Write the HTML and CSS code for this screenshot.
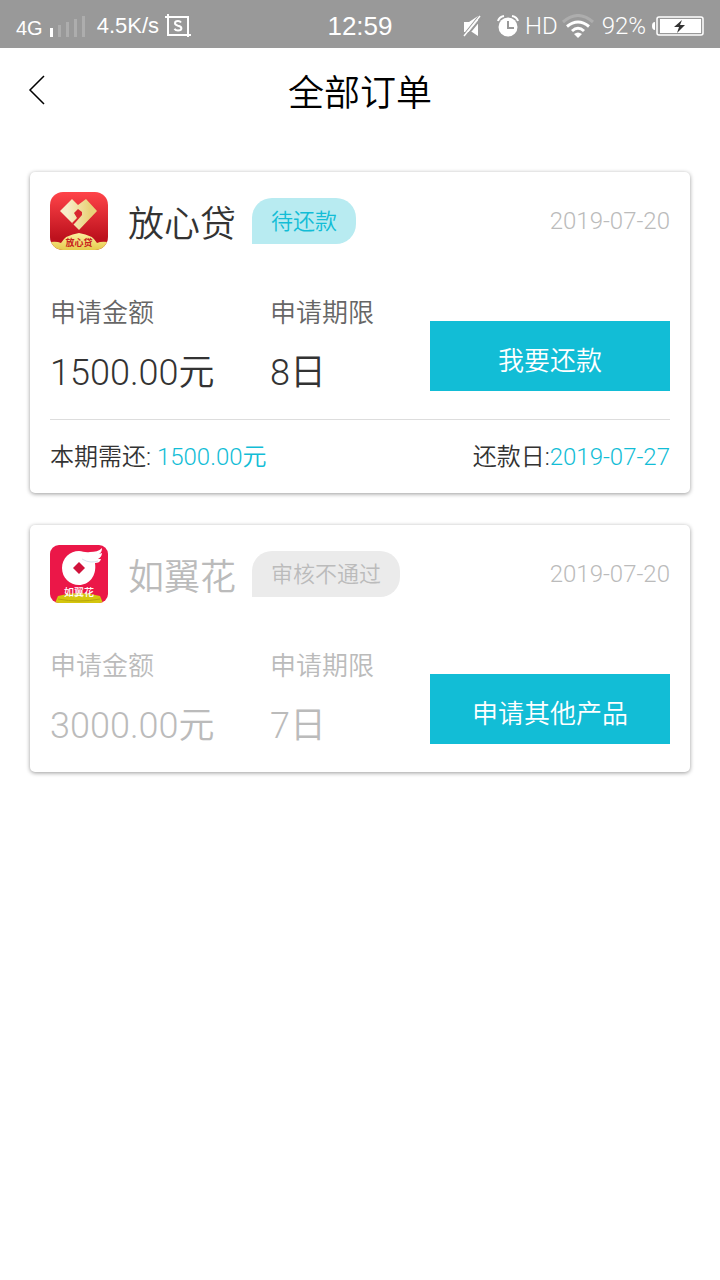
FILE: index.html
```html
<!DOCTYPE html>
<html lang="zh-CN">
<head>
    <meta charset="UTF-8">
    <meta name="viewport" content="width=device-width, initial-scale=1.0">
    <title>全部订单</title>
    <link rel="stylesheet" href="styles.css">
</head>
<body>
<div class="status-bar">
    <div class="status-left">
        <span class="network">4G</span>
        <svg class="signal" width="36" height="22" viewBox="0 0 36 22">
            <path d="M0 13h3v9H0z" fill="#fff"/>
            <path d="M8 10h3v12H8zM16 7h3v15h-3zM24 4h3v18h-3zM32 1h3v21h-3z" fill="#adadad"/>
        </svg>
        <span class="speed">4.5K/s</span>
        <svg class="shot" width="26" height="24" viewBox="0 0 26 24" fill="none" stroke="#fff" stroke-width="2">
            <path d="M0 3h23v20M3 0v21h23"/>
            <path d="M16 8.500q-1-1.500-3-1.500-3 0-3 2.300 0 1.700 3 2.400 3.400.7 3.400 2.600 0 2.200-3.400 2.200-2.500 0-3.500-1.800"/>
        </svg>
    </div>
    <div class="status-time">12:59</div>
    <div class="status-right">
        <svg width="20" height="22" viewBox="0 0 20 22">
            <path d="M1 7h5l9-6v20l-6-4H1z" fill="#fff"/>
            <path d="M0 21L17 0M2 23L20 1" stroke="#999" stroke-width="2"/>
            <path d="M1 21L17 1" stroke="#fff" stroke-width="1.500"/>
        </svg>
        <svg class="alarm" width="22" height="22" viewBox="0 0 22 22">
            <circle cx="11" cy="12" r="9.500" fill="#fff"/>
            <path d="M11 6v7h6" fill="none" stroke="#999" stroke-width="2"/>
            <path d="M1 6q1-4 6-5M21 6q-1-4-6-5" fill="none" stroke="#fff" stroke-width="2"/>
        </svg>
        <span class="hd">HD</span>
        <svg class="wifi" width="32" height="24" viewBox="0 0 32 24" fill="none" stroke-width="3">
            <path d="M1 8q15-13 30 0" stroke="#adadad"/>
            <path d="M5 12.500q11-9 22 0M10 17q6-5.500 12 0" stroke="#fff"/>
            <path d="M12 20q4-3 8 0l-4 4z" fill="#fff"/>
        </svg>
        <span class="percent">92%</span>
        <svg width="52" height="20" viewBox="0 0 52 20">
            <path d="M3 6q-3 0-3 4t3 4z" fill="#fff"/>
            <rect x="5" y="1" width="46" height="18" rx="2" fill="none" stroke="#fff" stroke-width="1.500"/>
            <path d="M8 3h41v14H8z" fill="#fff"/>
            <path d="M30 4l-8 7h5l-2 6 8-8h-5z" fill="#333"/>
        </svg>
    </div>
</div>

<header class="nav">
    <button type="button" class="back" aria-label="返回">
        <svg width="18" height="30" viewBox="0 0 18 30" fill="none" stroke="#000" stroke-width="1.500">
            <path d="M16 1L2 15l14 14"/>
        </svg>
    </button>
    <h1>全部订单</h1>
</header>

<main class="orders">
    <section class="card">
        <div class="card-head">
            <svg class="logo" viewBox="0 0 58 58">
                <defs>
                    <linearGradient id="red" x2="0" y2="1">
                        <stop offset="0" stop-color="#ff4449"/>
                        <stop offset="0.800" stop-color="#bd111d"/>
                    </linearGradient>
                    <linearGradient id="gold">
                        <stop offset="0.200" stop-color="#f8edc8"/>
                        <stop offset="0.800" stop-color="#e9d37a"/>
                    </linearGradient>
                    <linearGradient id="base" x2="0" y2="1">
                        <stop offset="0" stop-color="#fbf0a0"/>
                        <stop offset="1" stop-color="#e6cb4c"/>
                    </linearGradient>
                    <clipPath id="round"><rect width="58" height="58" rx="13"/></clipPath>
                </defs>
                <g clip-path="url(#round)">
                    <path d="M0 0h58v58H0z" fill="url(#red)"/>
                    <path d="M22 7l6 6 8-6 11 12-18 19L10 19z" fill="url(#gold)"/>
                    <path d="M28 17l4 3v3l-7 8-2 2-1-2 5-5-3-5z" fill="#d8262e"/>
                    <path d="M0 50q7-1 11 1 4-8 18-10 14 2 18 10 4-2 11-1v8H0z" fill="url(#base)"/>
                </g>
                <text x="29" y="54" text-anchor="middle" class="logo-text red">放心贷</text>
            </svg>
            <h2>放心贷</h2>
            <span class="badge">待还款</span>
            <time>2019-07-20</time>
        </div>
        <div class="card-body">
            <dl>
                <dt>申请金额</dt>
                <dd>1500.00元</dd>
            </dl>
            <dl>
                <dt>申请期限</dt>
                <dd>8日</dd>
            </dl>
            <button type="button" class="action">我要还款</button>
        </div>
        <div class="card-foot">
            <p>本期需还: <span>1500.00元</span></p>
            <p>还款日:<span>2019-07-27</span></p>
        </div>
    </section>

    <section class="card disabled">
        <div class="card-head">
            <svg class="logo" viewBox="0 0 58 58">
                <clipPath id="cut"><rect width="58" height="58" rx="9"/></clipPath>
                <g clip-path="url(#cut)">
                    <path d="M0 0h58v58H0z" fill="#eb1748"/>
                    <path d="M29 6c4 0 6 2 11 1 5 0 9-1 12-4 0 3-1 5-3 6l3-1c0 3-2 5-4 6h3c-1 3-3 4-6 4 2 13-6 22-16 22-9 0-17-7-17-17S20 6 29 6z" fill="#fff"/>
                    <path d="M32 14q5 3 9 3t7-1" fill="none" stroke="#d8e2ee"/>
                    <path d="M29 17l6 6-6 6-6-6z" fill="#d0123b"/>
                    <path d="M5 58l3-7q21-6 42 0l3 7z" fill="#d5c60d"/>
                    <path d="M8 54q21 4 42 0" fill="none" stroke="#b8a60c"/>
                </g>
                <text x="29" y="51" text-anchor="middle" class="logo-text white">如翼花</text>
            </svg>
            <h2>如翼花</h2>
            <span class="badge">审核不通过</span>
            <time>2019-07-20</time>
        </div>
        <div class="card-body">
            <dl>
                <dt>申请金额</dt>
                <dd>3000.00元</dd>
            </dl>
            <dl>
                <dt>申请期限</dt>
                <dd>7日</dd>
            </dl>
            <button type="button" class="action">申请其他产品</button>
        </div>
    </section>
</main>
</body>
</html>
```
FILE: styles.css
```css
* {
    box-sizing: border-box;
    margin: 0;
    padding: 0;
}

body {
    font-family: Roboto, "Noto Sans CJK SC", sans-serif;
    font-weight: 350;
    background: #fff;
    color: #333;
}

svg {
    display: block;
    flex-shrink: 0;
}

h1,
h2 {
    font-size: 36px;
    font-weight: 350;
}

/* status bar */
.status-bar {
    display: grid;
    grid-template-columns: 1fr auto 1fr;
    align-items: center;
    height: 48px;
    padding: 0 16px;
    background: #999;
    color: #fff;
    font-family: "Liberation Sans", sans-serif;
    font-size: 24px;
    font-weight: 400;
    line-height: 48px;
}

.status-left,
.status-right {
    display: flex;
    align-items: center;
}

.status-right {
    justify-content: flex-end;
}

.network {
    font-size: 20px;
    padding-top: 4px;
}

.signal {
    margin: 0 11px 0 7px;
}

.speed {
    font-size: 22px;
}

.shot {
    margin-left: 6px;
}

.status-time {
    font-size: 26px;
}

.alarm {
    margin: 0 6px 0 14px;
}

.hd,
.percent {
    font-family: Roboto, sans-serif;
    font-weight: 350;
}

.wifi {
    margin: 0 8px 0 4px;
}

.percent {
    margin-right: 6px;
}

/* title bar */
.nav {
    display: grid;
    grid-template-columns: 64px 1fr 64px;
    align-items: center;
    height: 84px;
}

.nav h1 {
    color: #000;
    text-align: center;
}

.back {
    display: flex;
    align-items: center;
    height: 84px;
    padding-left: 28px;
    border: none;
    background: none;
    cursor: pointer;
}

/* orders */
.orders {
    display: flex;
    flex-direction: column;
    gap: 32px;
    padding: 40px 30px;
}

.card {
    padding: 20px 20px 0;
    border-radius: 5px;
    background: #fff;
    box-shadow: 0 1px 4px rgba(0, 0, 0, 0.4);
}

.card-head {
    display: flex;
    align-items: center;
}

.logo {
    width: 58px;
    height: 58px;
    margin-right: 20px;
}

.logo-text {
    font-size: 9px;
    font-weight: 700;
}

.logo-text.red {
    fill: #c8201d;
}

.logo-text.white {
    font-size: 10px;
    font-weight: 500;
    fill: #fff;
}

.badge {
    height: 46px;
    padding: 0 19px;
    margin-left: 16px;
    border-radius: 20px 20px 20px 0;
    background: #b8ebf1;
    color: #12bdd6;
    font-size: 22px;
    line-height: 48px;
}

.card-head time {
    margin-left: auto;
    color: #bbb;
    font-size: 24px;
    line-height: 32px;
}

.card-body {
    display: grid;
    grid-template-columns: 11fr 8fr 240px;
    align-items: end;
    padding: 46px 0 28px;
}

.card-body dt {
    color: #666;
    font-size: 26px;
    line-height: 34px;
}

.card-body dd {
    margin-top: 25px;
    font-size: 36px;
    line-height: 36px;
}

.action {
    height: 70px;
    padding-top: 4px;
    border: none;
    background: #12bdd6;
    color: #fff;
    font-family: inherit;
    font-size: 26px;
    font-weight: 350;
    cursor: pointer;
}

.card-foot {
    display: flex;
    justify-content: space-between;
    padding-top: 2px;
    border-top: 1px solid #ddd;
    font-size: 24px;
    line-height: 71px;
}

.card-foot span {
    color: #12bdd6;
}

.disabled h2,
.disabled dt,
.disabled dd {
    color: #bbb;
}

.disabled .badge {
    background: #ebebeb;
    color: #bbb;
}
```
